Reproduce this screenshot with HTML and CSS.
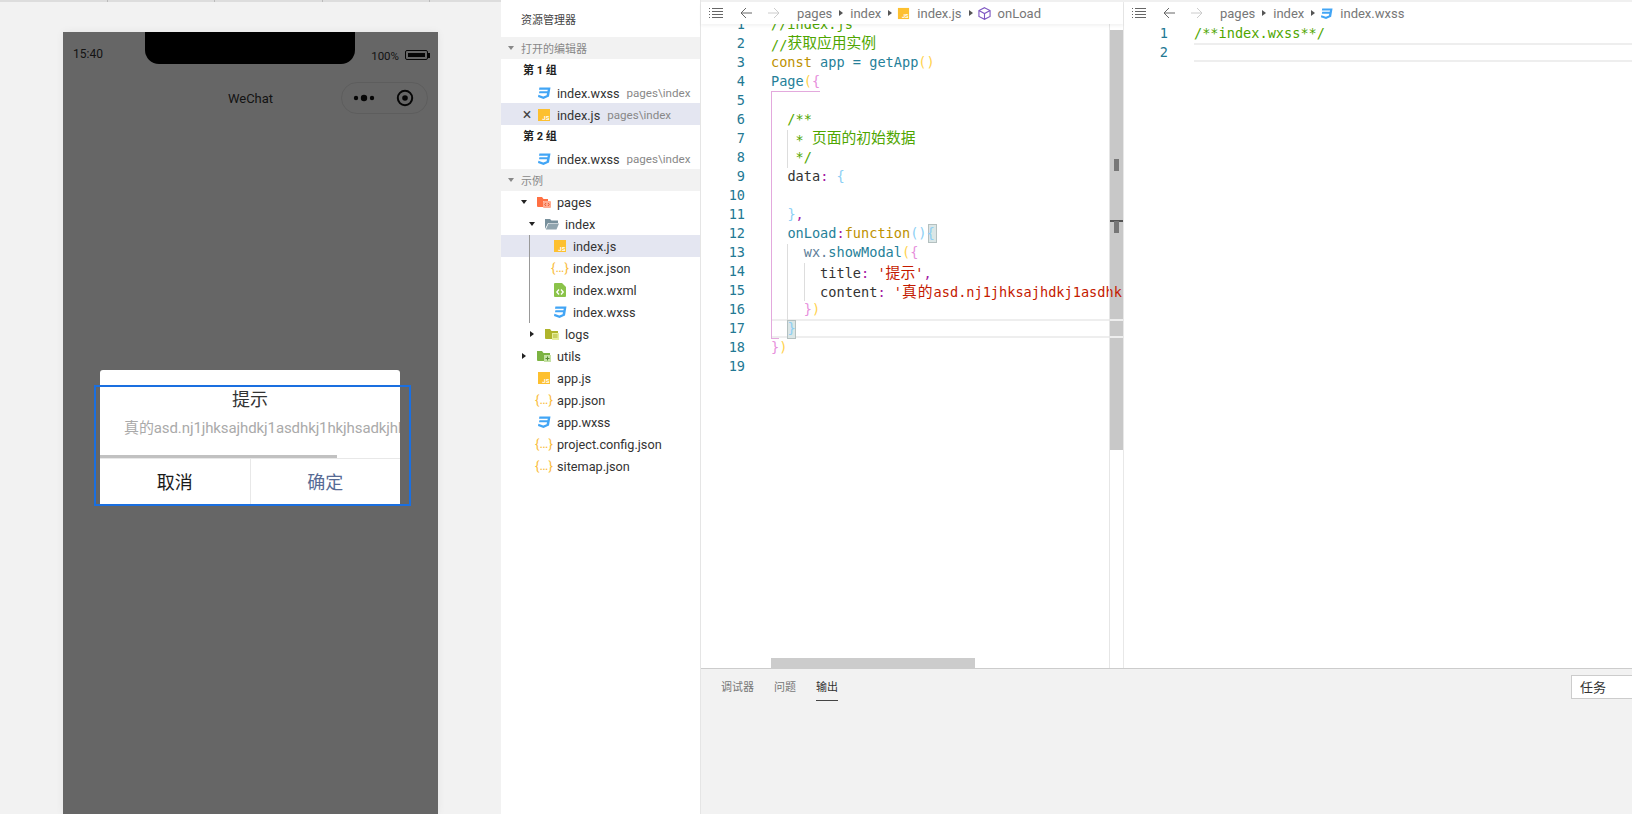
FILE: index.html
```html
<!DOCTYPE html>
<html lang="zh-CN">
<head>
  <meta charset="UTF-8" />
  <title>WeChat DevTools</title>
  <link rel="stylesheet" href="styles.css">
</head>
<body>

  <!-- icon sprites -->
  <svg class="sprites" xmlns="http://www.w3.org/2000/svg">
    <symbol id="i-css" viewBox="0 0 14 14">
      <path fill="#42a5f5" d="M2.400 1.500H13.500L12 10.500 6.500 13 1 11l.4-2.200 4.900 1.700 3.300-1.300.4-1.900H2l.4-2.100h8l.4-1.500H2z"/>
    </symbol>
    <symbol id="i-js" viewBox="0 0 14 14">
      <rect x="1" y="1" width="12" height="12" fill="#fdc02f"/>
      <text x="12.400" y="11.800" class="js-mark">JS</text>
    </symbol>
    <symbol id="i-xml" viewBox="0 0 14 14">
      <path fill="#8bc34a" d="M2 0h7l4 4v9a1 1 0 0 1-1 1H2a1 1 0 0 1-1-1V1a1 1 0 0 1 1-1z"/>
      <path fill="none" stroke="#fff" stroke-width="1.300" d="M6 6.500 3.800 9 6 11.500M8 6.500 10.200 9 8 11.500"/>
    </symbol>
    <symbol id="i-pages" viewBox="0 0 14 14">
      <path fill="#ff7043" d="M0 2h5l1.500 2H11v2H6v6H1a1 1 0 0 1-1-1z"/>
      <rect x="6" y="6" width="8" height="7" rx="1" fill="#ffab91"/>
      <path fill="none" stroke="#e64a19" stroke-width=".8" d="M9 8 7.800 9.500 9 11M11 8l1.200 1.500L11 11"/>
    </symbol>
    <symbol id="i-open" viewBox="0 0 14 14">
      <path fill="#78909c" d="M0 2h5l1.500 1.500H13V6H3L0 12z"/>
      <path fill="#90a4ae" d="M3.500 6.500H14L11.500 12.500H.8z"/>
    </symbol>
    <symbol id="i-logs" viewBox="0 0 14 14">
      <path fill="#afb42b" d="M0 2h5l1.500 2H13v2H7v6H1a1 1 0 0 1-1-1z"/>
      <rect x="7" y="6" width="7" height="7" fill="#e6ee9c"/>
      <path stroke="#afb42b" d="M8 8h4.500M8 10h4.500"/>
    </symbol>
    <symbol id="i-utils" viewBox="0 0 14 14">
      <path fill="#7cb342" d="M0 2h5l1.500 2H13v2H7v6H1a1 1 0 0 1-1-1z"/>
      <rect x="7" y="6" width="7" height="7" fill="#c5e1a5"/>
      <path stroke="#558b2f" d="M10.500 7.500v4M8.500 9.500h4"/>
    </symbol>
    <symbol id="i-list" viewBox="0 0 14 12">
      <path stroke="#666" d="M0 1.500h1M3 1.500h11M0 4.500h1M3 4.500h11M0 7.500h1M3 7.500h11M0 10.500h1M3 10.500h11"/>
    </symbol>
    <symbol id="i-arrow" viewBox="0 0 12 12">
      <path fill="none" stroke="currentColor" d="M12 6H1M6 1 1 6l5 5"/>
    </symbol>
    <symbol id="i-cube" viewBox="0 0 14 14">
      <path fill="none" stroke="#7e57c2" stroke-width="1.200" d="M7 .8 13 3.800v6.400L7 13.200 1 10.200V3.800zM1 3.800 7 7l6-3.200M7 7v6.200"/>
    </symbol>
  </svg>

  <!-- Simulator -->
  <div class="simulator">
    <div class="ruler"><span></span><span></span><span></span><span></span></div>

    <div class="phone">
      <div class="notch"></div>
      <div class="statusbar">
        <span class="time">15:40</span>
        <div class="battery-wrap">
          <span class="percent">100%</span>
          <div class="battery"><div class="battery-level"></div></div>
        </div>
      </div>
      <div class="navbar">
        <span></span>
        <span class="nav-title">WeChat</span>
        <div class="capsule">
          <svg width="22" height="8" viewBox="0 0 22 8">
            <circle cx="3" cy="4" r="2.200"/><circle cx="11" cy="4" r="3.200"/><circle cx="19" cy="4" r="2.200"/>
          </svg>
          <svg width="18" height="18" viewBox="0 0 18 18">
            <circle cx="9" cy="9" r="7.200" fill="none" stroke="#111" stroke-width="2"/><circle cx="9" cy="9" r="2.800"/>
          </svg>
        </div>
      </div>

      <div class="mask">
        <div class="modal">
          <div class="modal-title">提示</div>
          <div class="modal-msg">真的asd.nj1jhksajhdkj1asdhkj1hkjhsadkjhk</div>
          <div class="modal-scroll"></div>
          <div class="modal-btns">
            <div class="modal-btn">取消</div>
            <div class="modal-btn primary">确定</div>
          </div>
          <div class="inspect-box"></div>
        </div>
      </div>
    </div>
  </div>

  <!-- Explorer -->
  <div class="explorer">
    <div class="explorer-title">资源管理器</div>

    <div class="section"><i class="tri down gray"></i>打开的编辑器</div>
    <div class="group">第 1 组</div>
    <div class="row opened"><span class="twist"></span><svg class="ic"><use href="#i-css"/></svg><span>index.wxss</span><span class="path">pages\index</span></div>
    <div class="row opened active"><span class="twist close">×</span><svg class="ic"><use href="#i-js"/></svg><span>index.js</span><span class="path">pages\index</span></div>
    <div class="group">第 2 组</div>
    <div class="row opened"><span class="twist"></span><svg class="ic"><use href="#i-css"/></svg><span>index.wxss</span><span class="path">pages\index</span></div>

    <div class="section"><i class="tri down gray"></i>示例</div>
    <div class="tree">
      <div class="row"><span class="twist"><i class="tri down"></i></span><svg class="ic"><use href="#i-pages"/></svg><span>pages</span></div>
      <div class="row lv1"><span class="twist"><i class="tri down"></i></span><svg class="ic"><use href="#i-open"/></svg><span>index</span></div>
      <div class="row lv2 active"><span class="twist"></span><svg class="ic"><use href="#i-js"/></svg><span>index.js</span></div>
      <div class="row lv2"><span class="twist"></span><span class="ic json">{…}</span><span>index.json</span></div>
      <div class="row lv2"><span class="twist"></span><svg class="ic"><use href="#i-xml"/></svg><span>index.wxml</span></div>
      <div class="row lv2"><span class="twist"></span><svg class="ic"><use href="#i-css"/></svg><span>index.wxss</span></div>
      <div class="row lv1"><span class="twist"><i class="tri right"></i></span><svg class="ic"><use href="#i-logs"/></svg><span>logs</span></div>
      <div class="row"><span class="twist"><i class="tri right"></i></span><svg class="ic"><use href="#i-utils"/></svg><span>utils</span></div>
      <div class="row"><span class="twist"></span><svg class="ic"><use href="#i-js"/></svg><span>app.js</span></div>
      <div class="row"><span class="twist"></span><span class="ic json">{…}</span><span>app.json</span></div>
      <div class="row"><span class="twist"></span><svg class="ic"><use href="#i-css"/></svg><span>app.wxss</span></div>
      <div class="row"><span class="twist"></span><span class="ic json">{…}</span><span>project.config.json</span></div>
      <div class="row"><span class="twist"></span><span class="ic json">{…}</span><span>sitemap.json</span></div>
      <div class="tree-guide"></div>
    </div>
  </div>

  <!-- Editors + bottom panel -->
  <div class="workspace">
    <div class="editors">

      <div class="editor left">
        <div class="toolbar shadowed">
          <svg class="tool-list"><use href="#i-list"/></svg>
          <svg class="tool-arrow"><use href="#i-arrow"/></svg>
          <svg class="tool-arrow fwd"><use href="#i-arrow"/></svg>
          <div class="crumbs">
            <span>pages</span><i class="tri right small"></i><span>index</span><i class="tri right small"></i>
            <svg class="ic"><use href="#i-js"/></svg><span>index.js</span><i class="tri right small"></i>
            <svg class="ic"><use href="#i-cube"/></svg><span>onLoad</span>
          </div>
        </div>
        <div class="editor-body">
          <div class="scrollbar-v"></div>
          <div class="mark mark-a"></div>
          <div class="mark-line"></div>
          <div class="mark mark-b"></div>
          <div class="scrollbar-h"></div>
          <div class="lines scrolled">
            <div class="gutter">
              <div>1</div><div>2</div><div>3</div><div>4</div><div>5</div><div>6</div><div>7</div><div>8</div><div>9</div><div>10</div><div>11</div><div>12</div><div>13</div><div>14</div><div>15</div><div>16</div><div>17</div><div>18</div><div>19</div>
            </div>
            <div class="code">
              <div class="cur-line cur-17"></div>
              <div class="guide pink-v"></div>
              <div class="guide pink-top"></div>
              <div class="guide pink-bottom"></div>
              <div class="guide g-doc"></div>
              <div class="guide g-modal"></div>
              <div class="guide g-args"></div>
              <div class="match m-open"></div>
              <div class="match m-close"></div>
<pre class="ln c-com">//index.js</pre>
<pre class="ln c-com">//<span class="zh">获取应用实例</span></pre>
<pre class="ln"><span class="c-key">const</span> <span class="c-id">app</span> <span class="c-id">=</span> <span class="c-id">getApp</span><span class="c-b1">()</span></pre>
<pre class="ln"><span class="c-id">Page</span><span class="c-b1">(</span><span class="c-b2">{</span></pre>
<pre class="ln"> </pre>
<pre class="ln c-com">  /**</pre>
<pre class="ln c-com">   * <span class="zh">页面的初始数据</span></pre>
<pre class="ln c-com">   */</pre>
<pre class="ln">  <span class="c-prop">data</span><span class="c-colon">:</span> <span class="c-b3">{</span></pre>
<pre class="ln"> </pre>
<pre class="ln">  <span class="c-b3">}</span><span class="c-colon">,</span></pre>
<pre class="ln">  <span class="c-id">onLoad</span><span class="c-colon">:</span><span class="c-key">function</span><span class="c-b3">(){</span></pre>
<pre class="ln">    <span class="c-wx">wx.</span><span class="c-id">showModal</span><span class="c-b1">(</span><span class="c-b2">{</span></pre>
<pre class="ln">      <span class="c-prop">title</span><span class="c-colon">:</span> <span class="c-str">'<span class="zh">提示</span>'</span><span class="c-colon">,</span></pre>
<pre class="ln">      <span class="c-prop">content</span><span class="c-colon">:</span> <span class="c-str">'<span class="zh wide">真的</span>asd.nj1jhksajhdkj1asdhk</span></pre>
<pre class="ln">    <span class="c-b2">}</span><span class="c-b1">)</span></pre>
<pre class="ln">  <span class="c-b3">}</span></pre>
<pre class="ln"><span class="c-b2">}</span><span class="c-b1">)</span></pre>
<pre class="ln"> </pre>
            </div>
          </div>
        </div>
      </div>

      <div class="editor right">
        <div class="toolbar">
          <svg class="tool-list"><use href="#i-list"/></svg>
          <svg class="tool-arrow"><use href="#i-arrow"/></svg>
          <svg class="tool-arrow fwd"><use href="#i-arrow"/></svg>
          <div class="crumbs">
            <span>pages</span><i class="tri right small"></i><span>index</span><i class="tri right small"></i>
            <svg class="ic"><use href="#i-css"/></svg><span>index.wxss</span>
          </div>
        </div>
        <div class="editor-body">
          <div class="lines">
            <div class="gutter"><div>1</div><div>2</div></div>
            <div class="code">
              <div class="cur-line cur-2"></div>
<pre class="ln c-com">/**index.wxss**/</pre>
<pre class="ln"> </pre>
            </div>
          </div>
        </div>
      </div>

    </div>

    <div class="panel">
      <div class="panel-tabs">
        <span class="tab">调试器</span>
        <span class="tab">问题</span>
        <span class="tab on">输出</span>
      </div>
      <div class="panel-select">任务</div>
    </div>
  </div>

</body>
</html>
```

FILE: styles.css
```css
* {
  box-sizing: border-box;
}

html, body {
  height: 100%;
}

body {
  margin: 0;
  display: flex;
  height: 814px;
  overflow: hidden;
  background-color: #fff;
  font-family: Roboto, "Noto Sans CJK SC", sans-serif;
  color: #333;
}

.sprites {
  display: none;
}

.js-mark {
  font-family: Roboto, sans-serif;
  font-size: 6px;
  font-weight: 700;
  fill: #fff;
  text-anchor: end;
}

/* Simulator */
.simulator {
  width: 501px;
  flex-shrink: 0;
  background-color: #f2f2f2;
}

.ruler {
  display: flex;
  height: 2px;
  background-color: #ddd;
}

.ruler span {
  width: 107.500px;
  border-right: 1px solid #bbb;
}

.phone {
  position: relative;
  width: 375px;
  height: 782px;
  margin: 30px 0 0 63px;
  background-color: #fff;
  box-shadow: 0 0 8px rgba(0,0,0,0.06);
}

.notch {
  position: absolute;
  top: 0;
  left: 82px;
  width: 210px;
  height: 32px;
  z-index: 3;
  background-color: #000;
  border-radius: 0 0 14px 14px;
}

.statusbar {
  display: flex;
  justify-content: space-between;
  align-items: center;
  height: 44px;
  padding: 0 8px 0 10px;
  font-size: 12px;
  color: #333;
}

.battery-wrap {
  display: flex;
  align-items: center;
  gap: 6px;
  padding-top: 4px;
}

.percent {
  font-size: 11.500px;
}

.battery {
  position: relative;
  width: 23px;
  height: 10px;
  padding: 2px;
  border: 1px solid #111;
  border-radius: 2px;
  margin-right: 2px;
  margin-top: -2px;
}

.battery::after {
  content: "";
  position: absolute;
  top: 1.500px;
  right: -3px;
  width: 2px;
  height: 5px;
  background-color: #111;
}

.battery-level {
  height: 100%;
  background-color: #111;
}

.navbar {
  display: grid;
  grid-template-columns: 1fr auto 1fr;
  align-items: center;
  height: 44px;
}

.nav-title {
  font-size: 13px;
  color: #333;
}

.capsule {
  justify-self: end;
  display: flex;
  align-items: center;
  justify-content: space-between;
  width: 87px;
  height: 32px;
  margin-right: 10px;
  padding: 0 13px 0 11px;
  border: 1px solid #e8e8e8;
  border-radius: 16px;
}

.capsule svg {
  fill: #111;
}

.mask {
  position: absolute;
  top: 0;
  left: 0;
  right: 0;
  bottom: 0;
  z-index: 2;
  padding: 338px 0 0 37px;
  background-color: rgba(0,0,0,0.6);
}

.modal {
  position: relative;
  width: 300px;
  padding-top: 17px;
  background-color: #fff;
  border-radius: 3px 3px 0 0;
}

.modal-title {
  height: 26px;
  text-align: center;
  font-size: 18px;
  line-height: 26px;
  color: #333;
}

.modal-msg {
  height: 30px;
  padding-left: 24px;
  overflow: hidden;
  white-space: nowrap;
  font-size: 15px;
  line-height: 30px;
  letter-spacing: -0.100px;
  color: #aaa;
}

.modal-scroll {
  width: 237px;
  height: 3px;
  margin-top: 12px;
  background-color: #c1c1c1;
}

.modal-btns {
  display: flex;
  height: 47px;
  border-top: 1px solid #e8e8e8;
}

.modal-btn {
  flex: 1;
  text-align: center;
  font-size: 18px;
  line-height: 48px;
  color: #1a1a1a;
}

.modal-btn:first-child {
  border-right: 1px solid #e8e8e8;
}

.modal-btn.primary {
  color: #576b95;
}

.inspect-box {
  position: absolute;
  left: -6px;
  top: 15px;
  width: 317px;
  height: 121px;
  border: 2px solid #1a6fe0;
}

/* Explorer */
.explorer {
  width: 200px;
  flex-shrink: 0;
  border-right: 1px solid #e5e5e5;
  font-size: 12.700px;
}

.explorer-title {
  height: 37px;
  padding: 14px 0 0 20px;
  font-size: 11px;
  line-height: 14px;
  color: #444;
}

.section {
  display: flex;
  align-items: center;
  height: 22px;
  padding-left: 7px;
  background-color: #f2f2f2;
  font-size: 11px;
  color: #888;
}

.section .tri {
  margin-right: 7px;
}

.group {
  height: 22px;
  padding-left: 22px;
  font-size: 11px;
  font-weight: 700;
  line-height: 24px;
  color: #222;
}

.row {
  display: flex;
  align-items: center;
  height: 22px;
  padding-left: 15px;
}

.row.opened {
  padding-top: 2px;
}

.row.lv1 {
  padding-left: 23px;
}

.row.lv2 {
  padding-left: 31px;
}

.row.active {
  background-color: #e4e6f1;
}

.twist {
  display: flex;
  justify-content: center;
  align-items: center;
  width: 16px;
  margin-right: 5px;
  flex-shrink: 0;
}

.twist.close {
  padding-left: 6px;
  font-size: 16px;
  line-height: 16px;
  color: #444;
}

.ic {
  width: 14px;
  height: 14px;
  margin-right: 6px;
  flex-shrink: 0;
}

.ic.json {
  margin-left: -2px;
  margin-right: 8px;
  font-size: 13px;
  line-height: 14px;
  letter-spacing: 0.200px;
  white-space: nowrap;
  color: #f9bc3c;
}

.path {
  margin-left: 7px;
  font-size: 11.600px;
  color: #888;
}

.tree {
  position: relative;
}

.tree-guide {
  position: absolute;
  top: 44px;
  left: 28px;
  width: 1px;
  height: 88px;
  background-color: #999;
}

.tri {
  display: inline-block;
  width: 0;
  height: 0;
}

.tri.down {
  border-left: 3.500px solid transparent;
  border-right: 3.500px solid transparent;
  border-top: 4px solid #222;
}

.tri.down.gray {
  border-top-color: #888;
}

.tri.right {
  border-top: 3.500px solid transparent;
  border-bottom: 3.500px solid transparent;
  border-left: 4px solid #222;
}

.tri.right.small {
  margin: 0 7px;
  border-left-color: #555;
}

/* Editors */
.workspace {
  flex: 1;
  display: flex;
  flex-direction: column;
  min-width: 0;
  border-top: 2px solid #f0f0f0;
}

.editors {
  flex: 1;
  display: flex;
  min-height: 0;
}

.editor {
  display: flex;
  flex-direction: column;
  min-width: 0;
}

.editor.left {
  width: 422px;
}

.editor.right {
  flex: 1;
  border-left: 1px solid #e8e8e8;
}

.toolbar {
  position: relative;
  z-index: 2;
  display: flex;
  align-items: center;
  height: 22px;
  flex-shrink: 0;
  padding-left: 8px;
  background-color: #fff;
  font-size: 13px;
  color: #777;
}

.toolbar.shadowed {
  box-shadow: 0 2px 3px rgba(0,0,0,0.05);
}

.tool-list {
  width: 14px;
  height: 12px;
}

.tool-arrow {
  width: 12px;
  height: 12px;
  margin-left: 17px;
  color: #666;
}

.tool-arrow.fwd {
  margin-left: 16px;
  color: #ccc;
  transform: scaleX(-1);
}

.crumbs {
  display: flex;
  align-items: center;
  margin-left: 17px;
}

.crumbs .ic {
  width: 13px;
  height: 13px;
  margin: 0 7px 0 -2px;
}

.editor-body {
  position: relative;
  flex: 1;
  overflow: hidden;
}

.lines {
  display: flex;
  font-family: "DejaVu Sans Mono", "Noto Sans CJK SC", monospace;
  font-size: 13.600px;
  line-height: 19px;
}

.lines.scrolled {
  margin-top: -9px;
}

.gutter {
  position: relative;
  width: 70px;
  flex-shrink: 0;
  padding-right: 26px;
  text-align: right;
  color: #237893;
}

.code {
  position: relative;
  flex: 1;
  min-width: 0;
  overflow: hidden;
}

.ln {
  position: relative;
  height: 19px;
  margin: 0;
  font: inherit;
  white-space: pre;
}

.zh {
  position: relative;
  top: -2px;
  font-family: "Noto Sans CJK SC", sans-serif;
  font-size: 14.800px;
}

.c-str .zh {
  top: 0;
}

.zh.wide {
  letter-spacing: 1px;
}

.c-com { color: #4fa600; }
.c-key { color: #bd9100; }
.c-id { color: #267f99; }
.c-wx { color: #5f7f9a; }
.c-prop { color: #333; }
.c-colon { color: #a31aa3; }
.c-str { color: #c41a00; }
.c-b1 { color: #ffd24d; }
.c-b2 { color: #e78fdc; }
.c-b3 { color: #8ccff5; }

.cur-line {
  position: absolute;
  left: 0;
  right: 0;
  height: 19px;
  border-top: 2px solid #eee;
  border-bottom: 2px solid #eee;
}

.cur-17 { top: 304px; }
.cur-2 { top: 19px; }

.guide {
  position: absolute;
}

.pink-v {
  left: 0;
  top: 76px;
  width: 1px;
  height: 248px;
  background-color: #e3a9dd;
}

.pink-top {
  left: 0;
  top: 76px;
  width: 49px;
  height: 1px;
  background-color: #e3a9dd;
}

.pink-bottom {
  left: 0;
  top: 323px;
  width: 8px;
  height: 1px;
  background-color: #e3a9dd;
}

.g-doc {
  left: 16px;
  top: 115px;
  width: 1px;
  height: 38px;
  background-color: #ddd;
}

.g-modal {
  left: 16px;
  top: 229px;
  width: 1px;
  height: 76px;
  background-color: #ddd;
}

.g-args {
  left: 33px;
  top: 248px;
  width: 1px;
  height: 38px;
  background-color: #ddd;
}

.match {
  position: absolute;
  width: 9px;
  height: 19px;
  background-color: #dbe6e6;
  border: 1px solid #b4c0c0;
}

.m-open { left: 157px; top: 209px; }
.m-close { left: 16px; top: 305px; }

.scrollbar-v {
  position: absolute;
  top: 6px;
  left: 408px;
  width: 14px;
  height: 420px;
  background-color: #c8c8c8;
}

.editor.left .editor-body::after {
  content: "";
  position: absolute;
  top: 0;
  bottom: 0;
  left: 408px;
  width: 14px;
  border-left: 1px solid #e6e6e6;
}

.mark {
  position: absolute;
  left: 413px;
  width: 5px;
  background-color: #777;
}

.mark-a { top: 135px; height: 12px; }
.mark-b { top: 197px; height: 12px; }

.mark-line {
  position: absolute;
  top: 196px;
  left: 409px;
  width: 13px;
  height: 2px;
  background-color: #555;
}

.scrollbar-h {
  position: absolute;
  bottom: 0;
  left: 70px;
  width: 204px;
  height: 10px;
  background-color: #ccc;
}

/* Bottom panel */
.panel {
  display: flex;
  justify-content: space-between;
  height: 146px;
  flex-shrink: 0;
  padding: 6px 0 0 20px;
  background-color: #f2f2f2;
  border-top: 1px solid #ccc;
}

.panel-tabs {
  display: flex;
  gap: 20px;
  align-items: flex-start;
}

.tab {
  height: 26px;
  font-size: 11px;
  line-height: 26px;
  color: #777;
}

.tab.on {
  color: #333;
  border-bottom: 1px solid #444;
}

.panel-select {
  width: 61px;
  height: 24px;
  padding-left: 8px;
  background-color: #fff;
  border: 1px solid #ccc;
  border-right: 0;
  font-size: 13px;
  line-height: 23px;
  color: #333;
}
```
